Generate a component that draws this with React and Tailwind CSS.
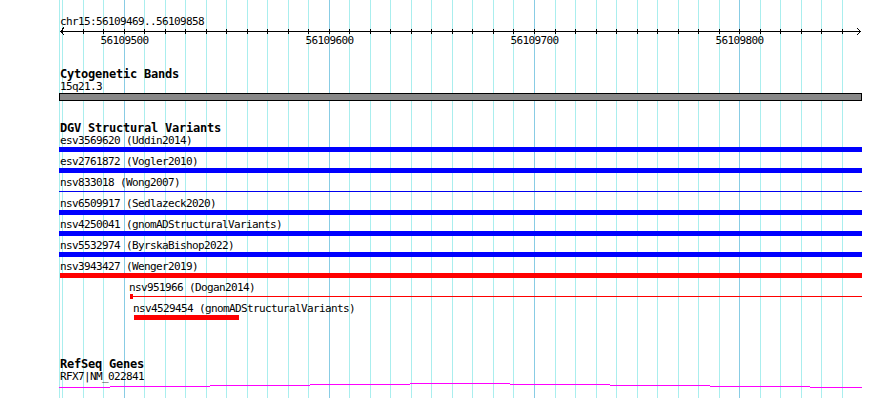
const GRID = Array.from({ length: 39 }, (_, i) => {
  const k = i - 3;
  return { x: Math.floor(124.3 + 20.51 * k), major: k % 10 === 0 };
});

const MAJOR = [
  { x: 124, label: "56109500" },
  { x: 329, label: "56109600" },
  { x: 534, label: "56109700" },
  { x: 739, label: "56109800" },
];

const BLUE_ROWS = [
  { label: "esv3569620 (Uddin2014)", kind: "thick" },
  { label: "esv2761872 (Vogler2010)", kind: "thick" },
  { label: "nsv833018 (Wong2007)", kind: "thin" },
  { label: "nsv6509917 (Sedlazeck2020)", kind: "thick" },
  { label: "nsv4250041 (gnomADStructuralVariants)", kind: "thick" },
  { label: "nsv5532974 (ByrskaBishop2022)", kind: "thick" },
];

const GENE_SEGS = [
  [59, 110, 5],
  [110, 210, 4],
  [210, 310, 3],
  [310, 410, 2],
  [410, 510, 1],
  [510, 610, 2],
  [610, 710, 3],
  [710, 810, 4],
  [810, 862, 5],
];

function Label({ children, className = "" }) {
  return (
    <div className={"h-[13px] text-[11px] tracking-[-0.62px] leading-[13px] whitespace-pre " + className}>
      {children}
    </div>
  );
}

export default function App() {
  return (
    <div className="relative w-[890px] h-[398px] overflow-hidden bg-white text-black font-['DejaVu_Sans_Mono',monospace]">
      <svg className="absolute left-0 top-0" width="890" height="398" shapeRendering="crispEdges">
        <rect x="59" y="0" width="1" height="398" fill="#aaeeee" />
        {GRID.map((g) => (
          <rect key={g.x} x={g.x} y="0" width="1" height="398" fill={g.major ? "#88cce4" : "#aaeeee"} />
        ))}
      </svg>

      <div className="relative flex flex-col pl-[59px] pt-[16px] w-[862px]">
        {/* ruler */}
        <div className="h-[11px] text-[11px] tracking-[-0.62px] leading-[11px] pl-[1px] whitespace-pre">chr15:56109469..56109858</div>
        <svg width="803" height="8" className="block" shapeRendering="crispEdges">
          <rect x="1" y="4" width="801" height="1" fill="#000" />
          {GRID.map((g) => (
            <rect key={g.x} x={g.x - 59} y="2" width="1" height="5" fill="#000" />
          ))}
          <polyline points="5,0.5 1.5,4.5 5,8" fill="none" stroke="#000" strokeWidth="1" />
          <polyline points="798,1 801.5,4.5 798,8" fill="none" stroke="#000" strokeWidth="1" />
        </svg>
        <div className="relative h-[11px] text-[11px] tracking-[-0.62px] leading-[11px]">
          {MAJOR.map((m) => (
            <span key={m.label} className="absolute top-0 w-[48px] text-center" style={{ left: m.x - 59 - 24 + 0.5 }}>
              {m.label}
            </span>
          ))}
        </div>

        {/* cytogenetic bands */}
        <div className="mt-[22px] h-[12px] text-[12px] tracking-[-0.22px] leading-[12px] font-bold pl-[1px] whitespace-pre">Cytogenetic Bands</div>
        <div className="mt-[1px] h-[11px] text-[11px] tracking-[-0.62px] leading-[11px] pl-[1px]">15q21.3</div>
        <div className="mt-[1px] h-[8px] w-[803px] border border-black bg-[#888888]" />

        {/* DGV */}
        <div className="mt-[21px] h-[12px] text-[12px] tracking-[-0.22px] leading-[12px] font-bold pl-[1px] whitespace-pre">DGV Structural Variants</div>
        {BLUE_ROWS.map((r) => (
          <div key={r.label} className="flex flex-col h-[21px]">
            <Label className="pl-[1px]">{r.label}</Label>
            <div className="h-[5px] w-[803px] flex flex-col">
              {r.kind === "thick" ? (
                <div className="h-[5px] bg-[#0000ff]" />
              ) : (
                <div className="mt-[2px] h-px bg-[#0000ee]" />
              )}
            </div>
          </div>
        ))}
        <div className="flex flex-col h-[21px]">
          <Label className="pl-[1px]">nsv3943427 (Wenger2019)</Label>
          <div className="ml-[1px] h-[5px] w-[802px] bg-[#ff0000]" />
        </div>
        <div className="flex flex-col h-[21px]">
          <Label className="ml-[70px]">nsv951966 (Dogan2014)</Label>
          <div className="flex h-[5px] w-[803px] pl-[71px]">
            <div className="w-[3px] h-[5px] bg-[#ff0000]" />
            <div className="flex-1 mt-[2px] h-px bg-[#ff0000]" />
          </div>
        </div>
        <div className="flex flex-col h-[21px]">
          <Label className="ml-[74px]">nsv4529454 (gnomADStructuralVariants)</Label>
          <div className="ml-[75px] h-[5px] w-[105px] bg-[#ff0000]" />
        </div>

        {/* RefSeq */}
        <div className="mt-[35px] h-[12px] text-[12px] tracking-[-0.22px] leading-[12px] font-bold pl-[1px] whitespace-pre">RefSeq Genes</div>
        <div className="mt-[1px] h-[11px] text-[11px] tracking-[-0.62px] leading-[11px] pl-[1px]">RFX7|NM_022841</div>
        <svg width="803" height="8" className="block" shapeRendering="crispEdges">
          {GENE_SEGS.map(([a, b, y]) => (
            <rect key={a} x={a - 59} y={y} width={b - a} height="1" fill="#ff00ff" />
          ))}
        </svg>
      </div>
    </div>
  );
}
